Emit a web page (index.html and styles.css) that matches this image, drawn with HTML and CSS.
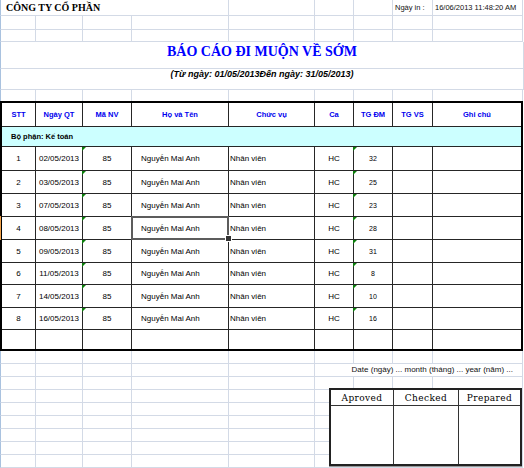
FILE: index.html
```html
<!DOCTYPE html>
<html lang="vi">
<head>
<meta charset="utf-8">
<title>Báo cáo đi muộn về sớm</title>
<link rel="stylesheet" href="styles.css">
</head>
<body>
<div class="grid top">
  <div class="c first company">CÔNG TY CỔ PHẦN</div>
  <div class="c"></div><div class="c"></div><div class="c"></div>
  <div class="c info">Ngày in :</div>
  <div class="c info">16/06/2013 11:48:20 AM</div>
  <div class="x"></div>

  <div class="c first"></div><div class="c"></div><div class="c"></div><div class="c"></div><div class="c"></div><div class="c"></div><div class="c"></div><div class="c"></div><div class="c"></div><div class="x"></div>
  <div class="c first"></div><div class="c"></div><div class="c"></div><div class="c"></div><div class="c"></div><div class="c"></div><div class="c"></div><div class="c"></div><div class="c"></div><div class="x"></div>

  <div class="c first title">BÁO CÁO ĐI MUỘN VỀ SỚM</div>
  <div class="c first subtitle">(Từ ngày: 01/05/2013Đến ngày: 31/05/2013)</div>

  <div class="c first nb"></div><div class="c nb"></div><div class="c nb"></div><div class="c nb"></div><div class="c nb"></div><div class="c nb"></div><div class="c nb"></div><div class="c nb"></div><div class="c nb"></div><div class="x"></div>
</div>

<div class="report">
  <div class="h">STT</div><div class="h">Ngày QT</div><div class="h">Mã NV</div><div class="h">Họ và Tên</div><div class="h">Chức vụ</div><div class="h">Ca</div><div class="h">TG ĐM</div><div class="h">TG VS</div><div class="h">Ghi chú</div>
  <div class="dept">Bộ phận: Kế toán</div>

  <div class="d">1</div><div class="d">02/05/2013</div><div class="d tri">85</div><div class="d name">Nguyễn Mai Anh</div><div class="d pos">Nhân viên</div><div class="d">HC</div><div class="d tri sm">32</div><div class="d"></div><div class="d"></div>
  <div class="d">2</div><div class="d">03/05/2013</div><div class="d tri">85</div><div class="d name">Nguyễn Mai Anh</div><div class="d pos">Nhân viên</div><div class="d">HC</div><div class="d tri sm">25</div><div class="d"></div><div class="d"></div>
  <div class="d">3</div><div class="d">07/05/2013</div><div class="d tri">85</div><div class="d name">Nguyễn Mai Anh</div><div class="d pos">Nhân viên</div><div class="d">HC</div><div class="d tri sm">23</div><div class="d"></div><div class="d"></div>
  <div class="d mark">4</div><div class="d">08/05/2013</div><div class="d tri">85</div><div class="d name sel">Nguyễn Mai Anh</div><div class="d pos">Nhân viên</div><div class="d">HC</div><div class="d tri sm">28</div><div class="d"></div><div class="d"></div>
  <div class="d">5</div><div class="d">09/05/2013</div><div class="d tri">85</div><div class="d name">Nguyễn Mai Anh</div><div class="d pos">Nhân viên</div><div class="d">HC</div><div class="d tri sm">31</div><div class="d"></div><div class="d"></div>
  <div class="d">6</div><div class="d">11/05/2013</div><div class="d tri">85</div><div class="d name">Nguyễn Mai Anh</div><div class="d pos">Nhân viên</div><div class="d">HC</div><div class="d tri sm">8</div><div class="d"></div><div class="d"></div>
  <div class="d">7</div><div class="d">14/05/2013</div><div class="d tri">85</div><div class="d name">Nguyễn Mai Anh</div><div class="d pos">Nhân viên</div><div class="d">HC</div><div class="d tri sm">10</div><div class="d"></div><div class="d"></div>
  <div class="d">8</div><div class="d">16/05/2013</div><div class="d tri">85</div><div class="d name">Nguyễn Mai Anh</div><div class="d pos">Nhân viên</div><div class="d">HC</div><div class="d tri sm">16</div><div class="d"></div><div class="d"></div>
  <div class="d"></div><div class="d"></div><div class="d"></div><div class="d"></div><div class="d"></div><div class="d"></div><div class="d"></div><div class="d"></div><div class="d"></div>
</div>

<div class="grid bottom">
  <div class="c first"></div><div class="c"></div><div class="c"></div><div class="c"></div><div class="c"></div><div class="c"></div><div class="c"></div><div class="c"></div><div class="c"></div><div class="x"></div>
  <div class="c first"></div><div class="c"></div><div class="c"></div><div class="c"></div><div class="c"></div><div class="c datecell">Date (ngày) ... month (tháng) ... year (năm) ...</div><div class="x"></div>
  <div class="c first"></div><div class="c"></div><div class="c"></div><div class="c"></div><div class="c"></div><div class="c"></div><div class="c"></div><div class="c"></div><div class="c"></div><div class="x"></div>
  <div class="c first"></div><div class="c"></div><div class="c"></div><div class="c"></div><div class="c"></div><div class="c"></div><div class="c"></div><div class="c"></div><div class="c"></div><div class="x"></div>
  <div class="c first"></div><div class="c"></div><div class="c"></div><div class="c"></div><div class="c"></div><div class="c"></div><div class="c"></div><div class="c"></div><div class="c"></div><div class="x"></div>
  <div class="c first"></div><div class="c"></div><div class="c"></div><div class="c"></div><div class="c"></div><div class="c"></div><div class="c"></div><div class="c"></div><div class="c"></div><div class="x"></div>
  <div class="c first"></div><div class="c"></div><div class="c"></div><div class="c"></div><div class="c"></div><div class="c"></div><div class="c"></div><div class="c"></div><div class="c"></div><div class="x"></div>
  <div class="c first"></div><div class="c"></div><div class="c"></div><div class="c"></div><div class="c"></div><div class="c"></div><div class="c"></div><div class="c"></div><div class="c"></div><div class="x"></div>
  <div class="c first"></div><div class="c"></div><div class="c"></div><div class="c"></div><div class="c"></div><div class="c"></div><div class="c"></div><div class="c"></div><div class="c"></div><div class="x"></div>

  <div class="sign">
    <div class="sh">Aproved</div><div class="sh">Checked</div><div class="sh">Prepared</div>
    <div class="sb"></div><div class="sb"></div><div class="sb"></div>
  </div>
</div>
</body>
</html>
```

FILE: styles.css
```css
* { box-sizing: border-box; }
html, body { margin: 0; padding: 0; background: #fff; }
body {
  width: 524px;
  height: 468px;
  overflow: hidden;
  font-family: "Liberation Sans", Arial, sans-serif;
  font-size: 8px;
  color: #111;
}

.grid {
  display: grid;
  grid-template-columns: 36px 47px 49px 97px 86px 39px 39px 40px 90px 1px;
}
.top { grid-template-rows: 16px 14px 12px 27px 21px 11px; }
.bottom { grid-template-rows: repeat(9, 13px); position: relative; }

.c {
  border-right: 1px solid #d3dae6;
  border-bottom: 1px solid #d3dae6;
  min-width: 0;
  white-space: nowrap;
}
.first { border-left: 1px solid #a9c2df; }
.nb { border-bottom: 0; }
.x { background: #fff; }

.company {
  grid-column: 1 / 5;
  font-family: "Liberation Serif", "Times New Roman", serif;
  font-weight: bold;
  font-size: 10px;
  line-height: 12px;
  padding: 2px 0 0 5px;
  color: #000;
}
.info {
  font-size: 7.5px;
  line-height: 12px;
  padding: 2px 0 0 2px;
  color: #111;
}

.title {
  grid-column: 1 / -1;
  font-family: "Liberation Serif", "Times New Roman", serif;
  font-weight: bold;
  font-size: 14px;
  line-height: 14px;
  padding-top: 3px;
  text-align: center;
  color: #0000ff;
}
.subtitle {
  grid-column: 1 / -1;
  font-weight: bold;
  font-style: italic;
  font-size: 9px;
  line-height: 10px;
  text-align: center;
  color: #000;
}

.report {
  display: grid;
  width: 523px;
  grid-template-columns: 33px 46px 48px 96px 85px 38px 38px 39px 88px;
  grid-template-rows: 23px 19px 23px 22px 22px 22px 22px 21px 22px 21px 19px;
  gap: 1px;
  background: #262626;
  border: 2px solid #000;
}
.report > div {
  background: #fff;
  display: flex;
  align-items: center;
  justify-content: center;
  white-space: nowrap;
  min-width: 0;
}
.report > .h {
  color: #0000ee;
  font-weight: bold;
  font-size: 7.5px;
}
.report > .dept {
  grid-column: 1 / -1;
  background: #ccffff;
  justify-content: flex-start;
  padding-left: 9px;
  font-weight: bold;
  font-size: 7.5px;
  color: #000;
}
.report > .d { font-size: 8px; color: #000; }
.report > .name { justify-content: flex-start; padding-left: 9px; }
.report > .pos { justify-content: flex-start; padding-left: 1px; }
.report > .sm { font-size: 7px; }

.tri { position: relative; }
.tri::before {
  content: "";
  position: absolute;
  left: -1px;
  top: 0;
  border-top: 4px solid #0a7d0a;
  border-right: 4px solid transparent;
}
.mark { position: relative; }
.mark::before {
  content: "";
  position: absolute;
  left: -2px;
  top: -1px;
  bottom: -1px;
  width: 1px;
  background: #f2a24a;
}
.sel {
  position: relative;
  box-shadow: 0 0 0 1px #5c5c5c, inset 0 0 0 1px #5c5c5c;
}
.sel::after {
  content: "";
  position: absolute;
  right: -4px;
  bottom: -3px;
  width: 5px;
  height: 5px;
  background: #333;
  border: 1px solid #fff;
}

.datecell {
  grid-column: 6 / 10;
  font-size: 8px;
  line-height: 12px;
  text-align: right;
  padding-right: 9px;
  color: #111;
}

.sign {
  position: absolute;
  left: 329px;
  top: 37px;
  width: 193px;
  height: 78px;
  display: grid;
  grid-template-columns: 62px 64px 61px;
  grid-template-rows: 15px 58px;
  gap: 1px;
  background: #333;
  border: 2px solid #222;
  box-shadow: 0 1px 0 #999;
}
.sign > div { background: #fff; }
.sh {
  display: flex;
  align-items: center;
  justify-content: center;
  font-family: "DejaVu Serif", serif;
  font-size: 9px;
  letter-spacing: 0.4px;
  color: #000;
}
```
